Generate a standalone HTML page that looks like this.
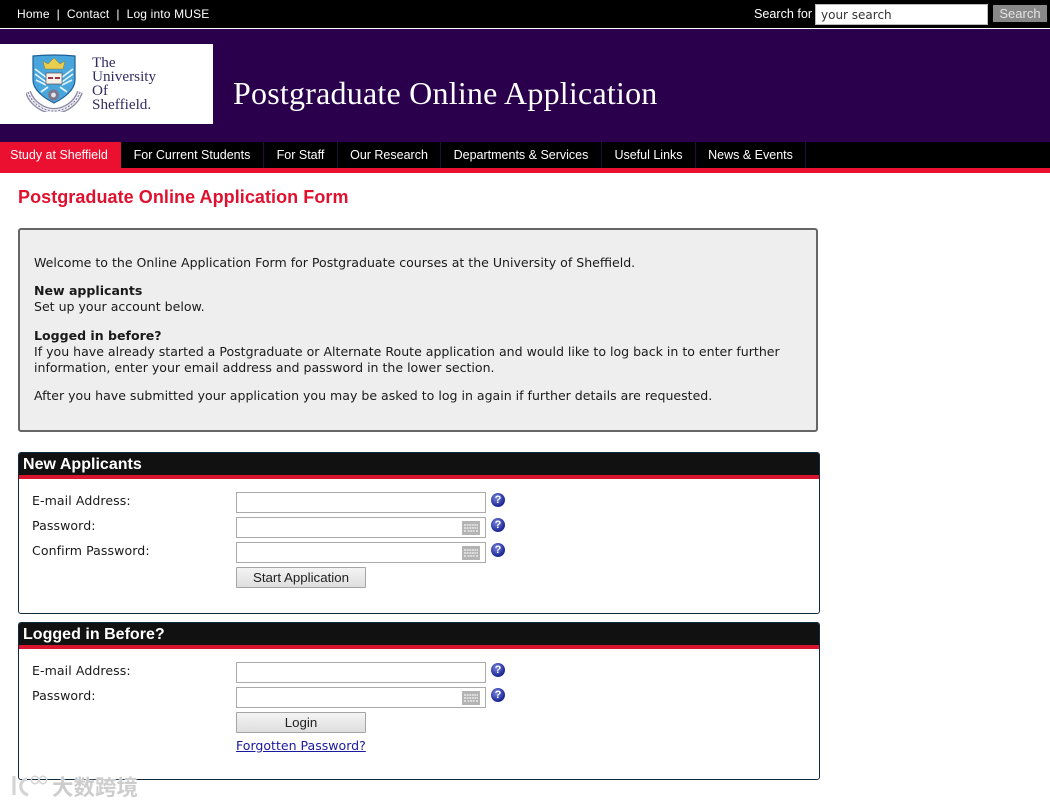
<!DOCTYPE html>
<html lang="en"><head><meta charset="utf-8"><title>Postgraduate Online Application</title>
<style>
html,body{margin:0;padding:0;background:#fff}
body{position:relative;width:1050px;height:805px;overflow:hidden;font-family:"Liberation Sans",Arial,sans-serif;color:#111}
.a{position:absolute;white-space:nowrap}
.v{font-family:"DejaVu Sans",Verdana,sans-serif;font-size:12.56px;line-height:16px;color:#1a1a1a}
.nav{top:142px;height:26px;line-height:26px;font-size:12.5px;color:#fff;text-align:center;border-right:1px solid #1f0f35;box-sizing:border-box}
.panel{left:18px;width:802px;box-sizing:border-box;border:1px solid #0e2a3c;border-radius:3px}
.phead{position:absolute;left:0;top:0;right:0;height:22px;background:#111;border-bottom:4px solid #d8142f;color:#fff;font-weight:bold;font-size:16px;line-height:23px;padding-left:4px;border-radius:2px 2px 0 0;letter-spacing:.02px}
.inp{width:250px;height:21px;box-sizing:border-box;border:1px solid #aaa;background:#fff;left:236px}
.btn{left:236px;width:130px;height:21px;box-sizing:border-box;border:1px solid #a5a5a5;border-radius:1px;background:linear-gradient(#f4f4f4,#dedede);font-size:13.3px;line-height:20px;text-align:center;color:#222}
.q{width:14px;height:14px;border-radius:50%;left:491px;background:radial-gradient(circle at 40% 35%,#7a88e0,#1f2a98 65%,#2a3090);color:#fff;font:bold 11px/14px "Liberation Sans",sans-serif;text-align:center}
.k{left:462px;width:18px;height:14px}
</style></head><body>
<div class="a" style="left:0;top:0;width:1050px;height:28px;background:#000"></div>
<div class="a" style="left:0;top:28px;width:1050px;height:1px;background:#fff"></div>
<div class="a" style="left:17px;top:6px;font-size:12px;line-height:16px;color:#fff;letter-spacing:.16px">Home&nbsp; |&nbsp; Contact&nbsp; |&nbsp; Log into MUSE</div>
<div class="a" style="left:754px;top:6px;font-size:12.6px;line-height:16px;color:#fff">Search for</div>
<div class="a v" style="left:815px;top:4px;width:173px;height:21px;box-sizing:border-box;background:#fff;border:1px solid #bbb;padding-left:5px;line-height:20px;font-size:12px;color:#333">your search</div>
<div class="a" style="left:993px;top:5px;width:54px;height:17px;background:#888;color:#e4e4e4;font-size:13px;line-height:17px;text-align:center">Search</div>

<div class="a" style="left:0;top:29px;width:1050px;height:113px;background:#2a004c"></div>
<div class="a" style="left:0;top:44px;width:213px;height:80px;background:#fff"></div>
<svg class="a" style="left:26px;top:54px" width="60" height="58" viewBox="0 0 60 58">
<path d="M2 38C6 50 18 57 28 57C38 57 50 50 54 38" fill="none" stroke="#8d8aa8" stroke-width="6"/>
<path d="M2 38C6 50 18 57 28 57C38 57 50 50 54 38" fill="none" stroke="#eeeef4" stroke-width="3.4"/>
<path d="M2 38C6 50 18 57 28 57C38 57 50 50 54 38" fill="none" stroke="#77758f" stroke-width="1" stroke-dasharray="2 1.5"/>
<path d="M7 2Q28 0 49 2V26C49 36 38 44 28 49C18 44 7 36 7 26Z" fill="#48a6dc" stroke="#1d5f96" stroke-width="1.2"/>
<path d="M9 15L21 24M9 20L20 28M10 26L20 31M47 15L35 24M47 20L36 28M46 26L36 31M15 38L22 33M41 38L34 33" stroke="#e4f3fb" stroke-width="1.7"/>
<path d="M17 7L22 10L28 4L34 10L39 7L37 15H19Z" fill="#e9cd4c" stroke="#8a7c3a" stroke-width=".5"/>
<rect x="20" y="19" width="16" height="11" fill="#f6f1e6" stroke="#5c4c55" stroke-width=".7"/>
<path d="M22 24H27M29 24H34" stroke="#a03048" stroke-width="2"/>
<circle cx="27.5" cy="41" r="5.5" fill="#7a788d"/><circle cx="27.5" cy="41" r="2.4" fill="#e4e4ea"/>
</svg>
<div class="a" style="left:92px;top:56px;font-family:'Liberation Serif',serif;font-size:15.2px;line-height:14px;color:#332c62">The<br>University<br>Of<br>Sheffield.</div>
<div class="a" style="left:233px;top:74px;font-family:'Liberation Serif',serif;font-size:32px;line-height:38px;color:#fff;letter-spacing:.22px">Postgraduate Online Application</div>

<div class="a" style="left:0;top:142px;width:1050px;height:26px;background:#000"></div>
<div class="a" style="left:0;top:168px;width:1050px;height:5px;background:#eb0f30"></div>
<div class="a nav" style="left:0;width:121px;background:#eb0f30;border:0;padding-right:3px">Study at Sheffield</div>
<div class="a nav" style="left:121px;width:143px">For Current Students</div>
<div class="a nav" style="left:264px;width:74px">For Staff</div>
<div class="a nav" style="left:338px;width:103px">Our Research</div>
<div class="a nav" style="left:441px;width:161px">Departments &amp; Services</div>
<div class="a nav" style="left:602px;width:94px">Useful Links</div>
<div class="a nav" style="left:696px;width:110px">News &amp; Events</div>

<div class="a" style="left:18px;top:186px;font-size:18px;line-height:22px;font-weight:bold;color:#e0112f;letter-spacing:.06px">Postgraduate Online Application Form</div>

<div class="a" style="left:18px;top:228px;width:800px;height:204px;box-sizing:border-box;background:#eee;border:2px solid #666;border-radius:3px"></div>
<div class="a v" style="left:34px;top:255px">Welcome to the Online Application Form for Postgraduate courses at the University of Sheffield.</div>
<div class="a v" style="left:34px;top:283px"><b>New applicants</b><br>Set up your account below.</div>
<div class="a v" style="left:34px;top:328px"><b>Logged in before?</b><br>If you have already started a Postgraduate or Alternate Route application and would like to log back in to enter further<br>information, enter your email address and password in the lower section.</div>
<div class="a v" style="left:34px;top:388px">After you have submitted your application you may be asked to log in again if further details are requested.</div>

<div class="a panel" style="top:452px;height:162px"><div class="phead">New Applicants</div></div>
<div class="a v" style="left:32px;top:493px;letter-spacing:.08px">E-mail Address:</div>
<div class="a v" style="left:32px;top:518px;letter-spacing:.08px">Password:</div>
<div class="a v" style="left:32px;top:543px;letter-spacing:.08px">Confirm Password:</div>
<div class="a inp" style="top:492px"></div>
<div class="a inp" style="top:517px"></div>
<div class="a inp" style="top:542px"></div>
<div class="a q" style="top:493px">?</div><div class="a q" style="top:518px">?</div><div class="a q" style="top:543px">?</div>
<svg class="a k" style="top:521px" viewBox="0 0 18 14"><rect width="18" height="14" fill="#b4b4b4"/><path d="M2 4H16M2 7H16M2 10H4M5.5 10H12.5M14 10H16" stroke="#f4f4f4" stroke-width="1.3" stroke-dasharray="2 .6"/></svg>
<svg class="a k" style="top:546px" viewBox="0 0 18 14"><rect width="18" height="14" fill="#b4b4b4"/><path d="M2 4H16M2 7H16M2 10H4M5.5 10H12.5M14 10H16" stroke="#f4f4f4" stroke-width="1.3" stroke-dasharray="2 .6"/></svg>
<div class="a btn" style="top:567px">Start Application</div>

<div class="a panel" style="top:622px;height:158px"><div class="phead">Logged in Before?</div></div>
<div class="a v" style="left:32px;top:663px;letter-spacing:.08px">E-mail Address:</div>
<div class="a v" style="left:32px;top:688px;letter-spacing:.08px">Password:</div>
<div class="a inp" style="top:662px"></div>
<div class="a inp" style="top:687px"></div>
<div class="a q" style="top:663px">?</div><div class="a q" style="top:688px">?</div>
<svg class="a k" style="top:691px" viewBox="0 0 18 14"><rect width="18" height="14" fill="#b4b4b4"/><path d="M2 4H16M2 7H16M2 10H4M5.5 10H12.5M14 10H16" stroke="#f4f4f4" stroke-width="1.3" stroke-dasharray="2 .6"/></svg>
<div class="a btn" style="top:712px">Login</div>
<div class="a v" style="left:236px;top:738px;color:#1a1a9c;text-decoration:underline">Forgotten Password?</div>

<div class="a" style="left:52px;top:775px;font-family:'Liberation Sans','Noto Sans CJK SC',sans-serif;font-size:21.5px;line-height:26px;color:#cdcdcd;font-weight:bold;text-shadow:0 0 2px #fff,0 0 1px #fff">大数跨境</div>
<svg class="a" style="left:10px;top:772px" width="40" height="26" viewBox="0 0 40 26"><path d="M4 4V23M17 7C9 8 8 20 18 23" fill="none" stroke="#d4d4d4" stroke-width="3.2"/><circle cx="25" cy="8" r="3.7" fill="none" stroke="#d4d4d4" stroke-width="1.5"/><circle cx="33" cy="8" r="3.7" fill="none" stroke="#d4d4d4" stroke-width="1.5"/></svg>
</body></html>
